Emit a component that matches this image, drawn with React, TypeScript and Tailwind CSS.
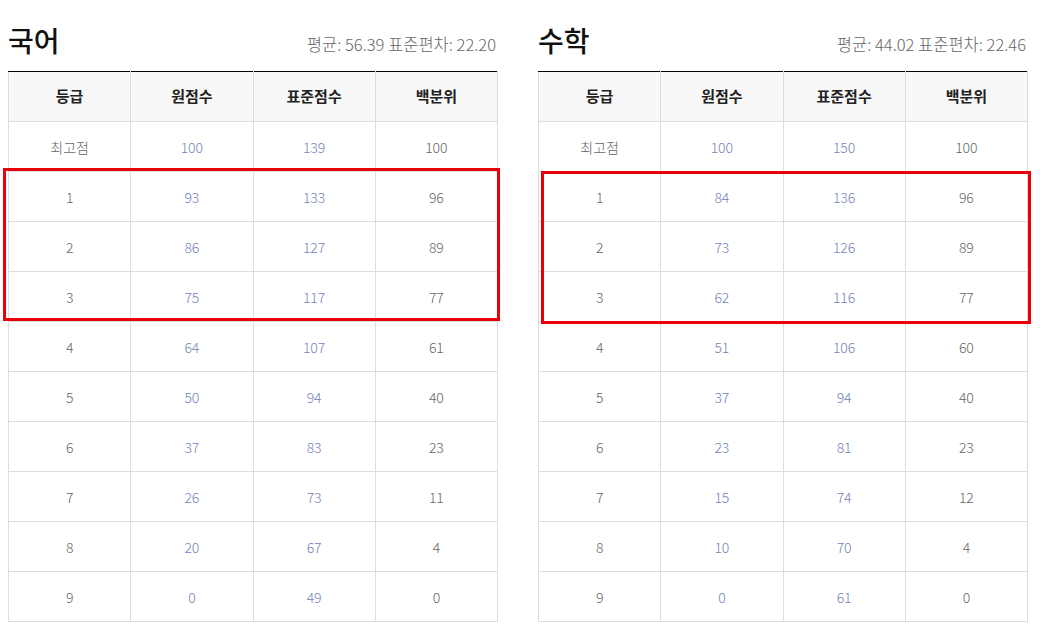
import React from "react";

type Row = [string, string, string, string];

const korean: Row[] = [
  ["최고점", "100", "139", "100"],
  ["1", "93", "133", "96"],
  ["2", "86", "127", "89"],
  ["3", "75", "117", "77"],
  ["4", "64", "107", "61"],
  ["5", "50", "94", "40"],
  ["6", "37", "83", "23"],
  ["7", "26", "73", "11"],
  ["8", "20", "67", "4"],
  ["9", "0", "49", "0"],
];

const math: Row[] = [
  ["최고점", "100", "150", "100"],
  ["1", "84", "136", "96"],
  ["2", "73", "126", "89"],
  ["3", "62", "116", "77"],
  ["4", "51", "106", "60"],
  ["5", "37", "94", "40"],
  ["6", "23", "81", "23"],
  ["7", "15", "74", "12"],
  ["8", "10", "70", "4"],
  ["9", "0", "61", "0"],
];

const heads = ["등급", "원점수", "표준점수", "백분위"];

function Section({ title, stats, rows }: { title: string; stats: string; rows: Row[] }) {
  return (
    <div className="w-[490px] shrink-0">
      <div className="flex h-[71px] justify-between">
        <h2 className="pt-[21px] text-[28px] leading-[38px] font-medium text-[#111]">{title}</h2>
        <div className="pt-[34px] pr-[2px] text-[16.5px] leading-[20px] font-light text-[#666]">{stats}</div>
      </div>
      <table className="w-[490px] border-collapse table-fixed border-t border-t-black">
        <thead>
          <tr className="h-[50px] bg-[#f8f8f8]">
            {heads.map((h) => (
              <th
                key={h}
                className="border border-[#dddddd] border-t-black text-[15px] font-bold text-[#222] p-0"
              >
                {h}
              </th>
            ))}
          </tr>
        </thead>
        <tbody>
          {rows.map((r, i) => (
            <tr key={i} className="h-[50px]">
              {r.map((c, j) => (
                <td
                  key={j}
                  className={
                    "border border-[#dddddd] text-center text-[14px] font-light p-0 pt-[2px] " +
                    (j === 1 || j === 2 ? "text-[#7383b8]" : "text-[#666]")
                  }
                >
                  {c}
                </td>
              ))}
            </tr>
          ))}
        </tbody>
      </table>
    </div>
  );
}

export default function App() {
  return (
    <div
      className="relative w-[1040px] h-[635px] bg-white overflow-hidden"
      style={{ fontFamily: '"Noto Sans CJK KR", "Noto Sans", sans-serif' }}
    >
      <div className="flex gap-[40px] pl-[8px]">
        <Section title="국어" stats="평균: 56.39 표준편차: 22.20" rows={korean} />
        <Section title="수학" stats="평균: 44.02 표준편차: 22.46" rows={math} />
      </div>
      <div className="absolute left-[3px] top-[168px] w-[497px] h-[153px] border-[3px] border-[#e8000b]" />
      <div className="absolute left-[541px] top-[171px] w-[490px] h-[153px] border-[3px] border-[#e8000b]" />
    </div>
  );
}
